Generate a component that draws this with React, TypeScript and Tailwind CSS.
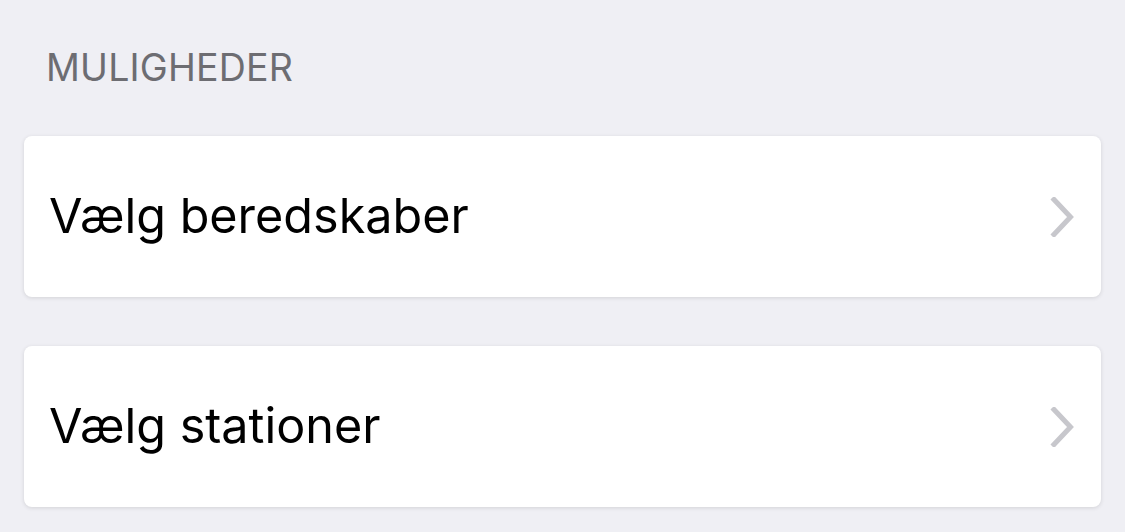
const items = ['Vælg beredskaber', 'Vælg stationer'];

function Chevron() {
  return (
    <svg width="24" height="40" viewBox="0 0 24 40" fill="none" className="shrink-0">
      <path d="M4 2.5 L20.5 20 L4 37.5" stroke="#c7c7cc" strokeWidth="5" strokeLinecap="square" strokeLinejoin="miter" />
    </svg>
  );
}

export default function App() {
  return (
    <div className="h-[532px] w-[1125px] overflow-hidden bg-[#efeff4] font-['Inter',sans-serif]">
      <div className="px-[46px] pt-[48px] text-[37.5px] leading-[40px] tracking-[0.2px] text-[#6d6d72]">
        MULIGHEDER
      </div>
      <div className="mt-[48px] flex flex-col gap-[49px] pl-6 pr-6">
        {items.map((label) => (
          <div
            key={label}
            className="flex h-[161px] items-center justify-between rounded-[8px] bg-white pl-[25px] pr-[27px] shadow-[0_1px_4px_rgba(0,0,0,0.12)]"
          >
            <span className="text-[48.5px] leading-none text-black">{label}</span>
            <Chevron />
          </div>
        ))}
      </div>
    </div>
  );
}
